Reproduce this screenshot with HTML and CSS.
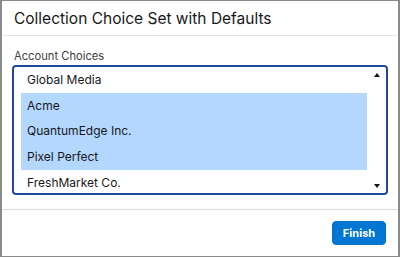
FILE: index.html
```html
<!DOCTYPE html>
<html>
<head>
<meta charset="utf-8">
<link rel="stylesheet" href="styles.css">
</head>
<body>
<div class="modal">
  <header class="modal-header">Collection Choice Set with Defaults</header>
  <main class="modal-body">
    <div class="label">Account Choices</div>
    <div class="listbox">
      <div class="options">
        <div class="option">Global Media</div>
        <div class="option selected">Acme</div>
        <div class="option selected">QuantumEdge Inc.</div>
        <div class="option selected">Pixel Perfect</div>
        <div class="option">FreshMarket Co.</div>
      </div>
      <div class="scrollbar">
        <span class="arrow up"></span>
        <span class="arrow down"></span>
      </div>
    </div>
  </main>
  <footer class="modal-footer">
    <button class="btn">Finish</button>
  </footer>
</div>
</body>
</html>
```

FILE: styles.css
```css
* { box-sizing: border-box; }
html, body { margin: 0; padding: 0; background: #fff; }
body {
  font-family: Inter, "Liberation Sans", sans-serif;
  color: #181818;
}
.modal {
  width: 400px;
  height: 257px;
  border: 1px solid #8a8a8a;
  border-left-width: 2px;
  border-right-width: 2px;
  display: flex;
  flex-direction: column;
  overflow: hidden;
}
.modal-header {
  height: 35px;
  flex: none;
  padding: 0 0 0 12px;
  display: flex;
  align-items: center;
  font-size: 15.5px;
  border-bottom: 1px solid #e3e3e3;
}
.modal-body {
  flex: 1;
  padding: 12px 10px 0 10px;
  border-bottom: 1px solid #dcdcdc;
}
.label {
  font-size: 11.2px;
  color: #3e3e3c;
  line-height: 16px;
  margin-left: 2px;
  margin-bottom: 1px;
}
.listbox {
  height: 130px;
  border: 2px solid #1d4a9b;
  border-radius: 4px;
  display: flex;
  overflow: hidden;
}
.options {
  flex: 1;
  padding-left: 7px;
  overflow: hidden;
}
.option {
  height: 25.67px;
  line-height: 25.67px;
  font-size: 12px;
  padding-left: 6px;
  white-space: nowrap;
}
.option.selected { background: #b3d7ff; }
.scrollbar {
  width: 19px;
  flex: none;
  display: flex;
  flex-direction: column;
  justify-content: space-between;
  align-items: center;
  padding: 6px 0 5px 0;
}
.arrow {
  width: 0;
  height: 0;
  border-left: 3px solid transparent;
  border-right: 3px solid transparent;
}
.arrow.up { border-bottom: 4px solid #111; }
.arrow.down { border-top: 4px solid #111; }
.modal-footer {
  height: 46px;
  flex: none;
  display: flex;
  justify-content: flex-end;
  align-items: center;
  padding-right: 12px;
}
.btn {
  width: 54px;
  height: 24px;
  background: #0176d3;
  color: #fff;
  border: 1px solid #0170c9;
  border-radius: 4px;
  font-family: Inter, "Liberation Sans", sans-serif;
  font-weight: 700;
  font-size: 11px;
  padding: 0;
}
```
